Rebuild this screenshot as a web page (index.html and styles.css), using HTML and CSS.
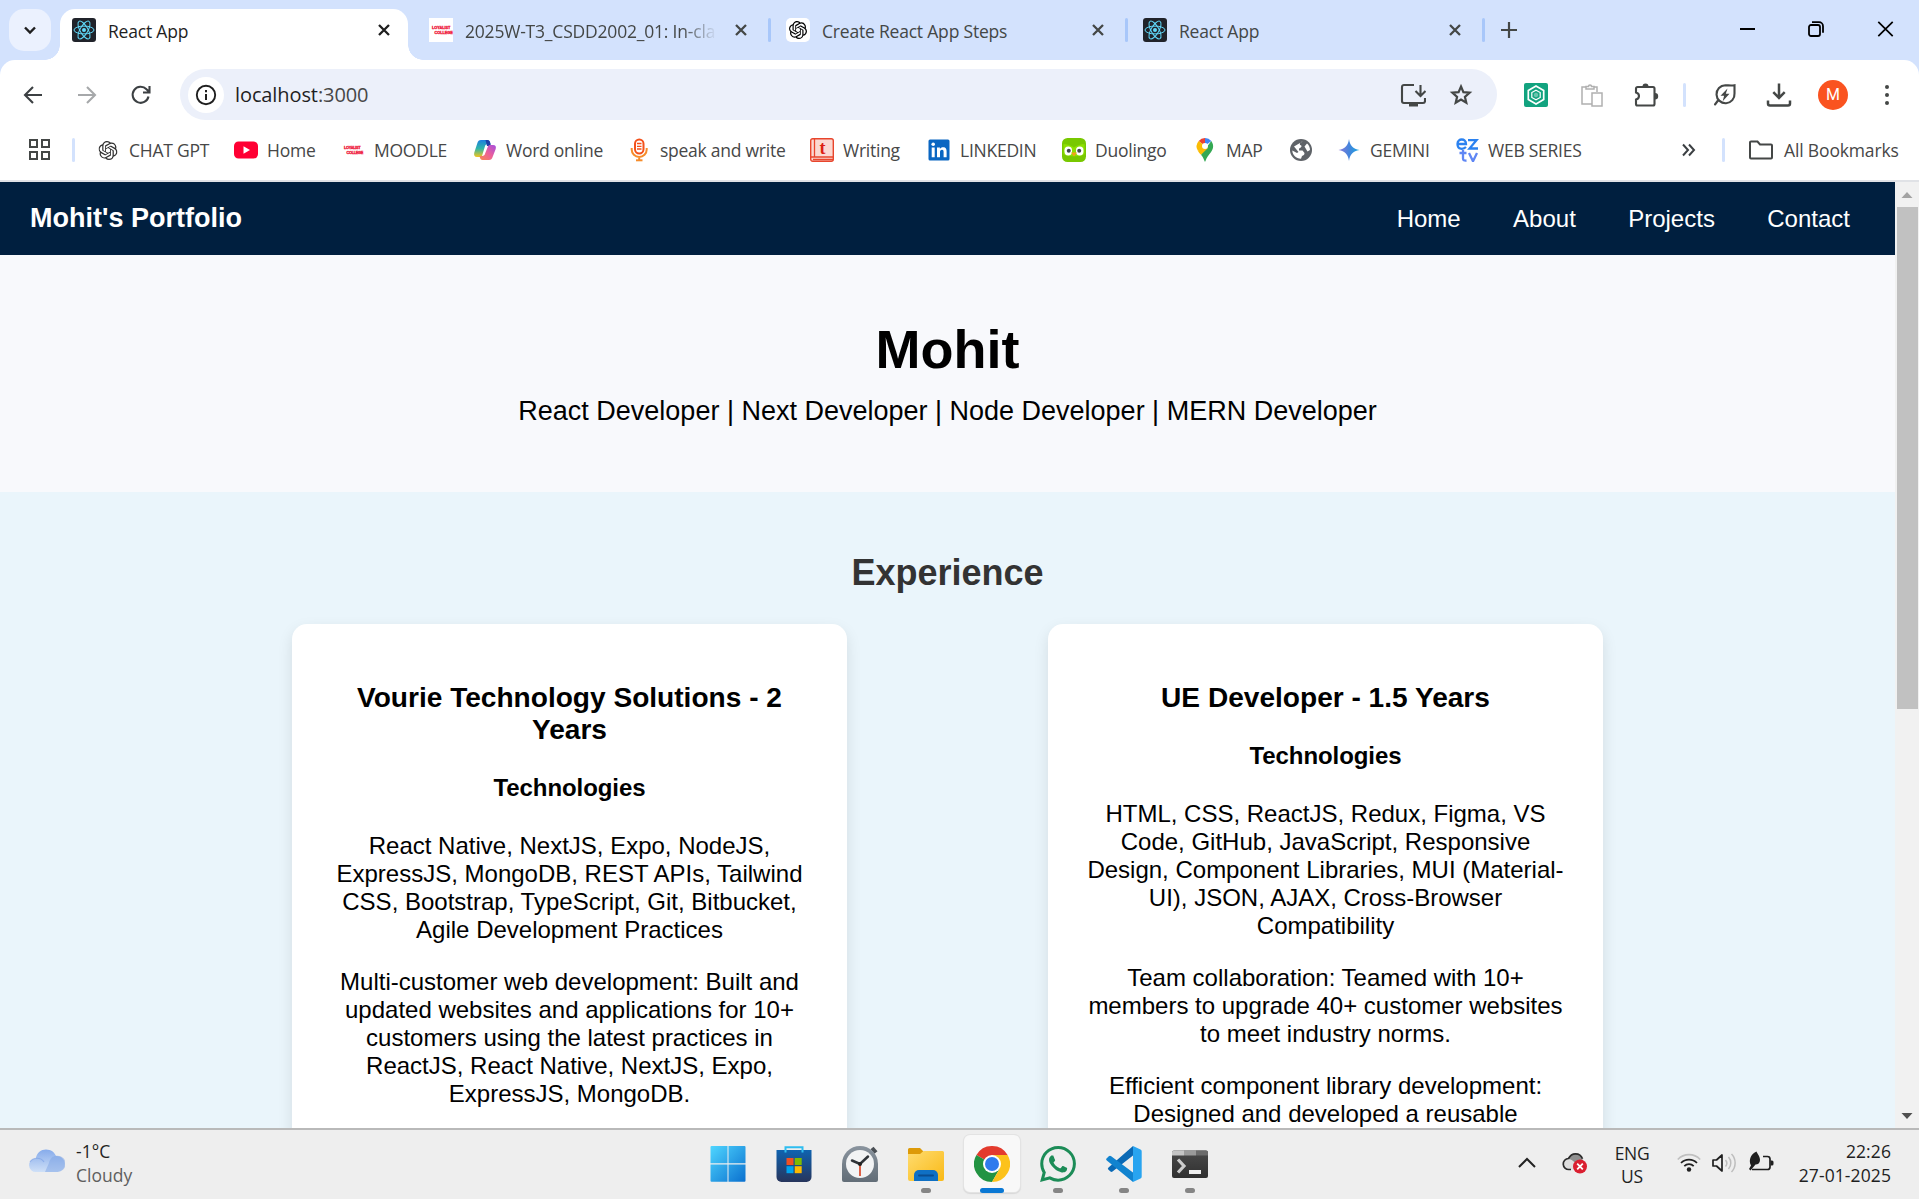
FILE: index.html
```html
<!DOCTYPE html>
<html lang="en">
<head>
<meta charset="utf-8">
<title>React App</title>
<link rel="stylesheet" href="styles.css">
</head>
<body>
<svg class="defs" width="0" height="0">
  <defs>
    <symbol id="react" viewBox="0 0 24 24"><rect width="24" height="24" rx="3" fill="#20232a"/><g fill="none" stroke="#61dafb" stroke-width="1"><ellipse cx="12" cy="12" rx="10" ry="3.9"/><ellipse cx="12" cy="12" rx="10" ry="3.9" transform="rotate(60 12 12)"/><ellipse cx="12" cy="12" rx="10" ry="3.9" transform="rotate(120 12 12)"/></g><circle cx="12" cy="12" r="2" fill="#61dafb"/></symbol>
    <symbol id="openai" viewBox="0 0 24 24"><path d="M22.2819 9.8211a5.9847 5.9847 0 0 0-.5157-4.9108 6.0462 6.0462 0 0 0-6.5098-2.9A6.0651 6.0651 0 0 0 4.9807 4.1818a5.9847 5.9847 0 0 0-3.9977 2.9 6.0462 6.0462 0 0 0 .7427 7.0966 5.98 5.98 0 0 0 .511 4.9107 6.051 6.051 0 0 0 6.5146 2.9001A5.9847 5.9847 0 0 0 13.2599 24a6.0557 6.0557 0 0 0 5.7718-4.2058 5.9894 5.9894 0 0 0 3.9977-2.9001 6.0557 6.0557 0 0 0-.7475-7.0729zm-9.022 12.6081a4.4755 4.4755 0 0 1-2.8764-1.0408l.1419-.0804 4.7783-2.7582a.7948.7948 0 0 0 .3927-.6813v-6.7369l2.02 1.1686a.071.071 0 0 1 .038.052v5.5826a4.504 4.504 0 0 1-4.4945 4.4944zm-9.6607-4.1254a4.4708 4.4708 0 0 1-.5346-3.0137l.142.0852 4.783 2.7582a.7712.7712 0 0 0 .7806 0l5.8428-3.3685v2.3324a.0804.0804 0 0 1-.0332.0615L9.74 19.9502a4.4992 4.4992 0 0 1-6.1408-1.6464zM2.3408 7.8956a4.485 4.485 0 0 1 2.3655-1.9728V11.6a.7664.7664 0 0 0 .3879.6765l5.8144 3.3543-2.0201 1.1685a.0757.0757 0 0 1-.071 0l-4.8303-2.7865A4.504 4.504 0 0 1 2.3408 7.872zm16.5963 3.8558L13.1038 8.364 15.1192 7.2a.0757.0757 0 0 1 .071 0l4.8303 2.7913a4.4944 4.4944 0 0 1-.6765 8.1042v-5.6772a.79.79 0 0 0-.407-.667zm2.0107-3.0231l-.142-.0852-4.7735-2.7818a.7759.7759 0 0 0-.7854 0L9.409 9.2297V6.8974a.0662.0662 0 0 1 .0284-.0615l4.8303-2.7866a4.4992 4.4992 0 0 1 6.6802 4.66zM8.3065 12.863l-2.02-1.1638a.0804.0804 0 0 1-.038-.0567V6.0742a4.4992 4.4992 0 0 1 7.3757-3.4537l-.142.0805L8.704 5.459a.7948.7948 0 0 0-.3927.6813zm1.0976-2.3654l2.602-1.4998 2.6069 1.4998v2.9994l-2.5974 1.4997-2.6067-1.4997Z"/></symbol>
    <symbol id="x" viewBox="0 0 24 24"><path d="M7 7l10 10M17 7L7 17" fill="none" stroke="currentColor" stroke-width="2.3"/></symbol>
    <linearGradient id="gWin" x1="0" y1="0" x2="1" y2="1"><stop offset="0" stop-color="#4fd6ff"/><stop offset="1" stop-color="#0a70cf"/></linearGradient>
    <linearGradient id="gStore" x1="0" y1="0" x2="0" y2="1"><stop offset="0" stop-color="#0f63b0"/><stop offset="1" stop-color="#27355c"/></linearGradient>
    <linearGradient id="gGray" x1="0" y1="0" x2="0" y2="1"><stop offset="0" stop-color="#8a949e"/><stop offset="1" stop-color="#626d77"/></linearGradient>
    <linearGradient id="gFolder" x1="0" y1="0" x2="1" y2="1"><stop offset="0" stop-color="#ffdc70"/><stop offset="1" stop-color="#f9b916"/></linearGradient>
    <linearGradient id="gCloud" x1="0" y1="0" x2="0" y2="1"><stop offset="0" stop-color="#86abeb"/><stop offset="1" stop-color="#cfe0f7"/></linearGradient>
    <linearGradient id="gGem" x1="0" y1="0" x2="1" y2="0"><stop offset="0" stop-color="#8b7bd8"/><stop offset=".5" stop-color="#4584dc"/><stop offset="1" stop-color="#1aa6e0"/></linearGradient>
    <linearGradient id="gTerm" x1="0" y1="0" x2="0" y2="1"><stop offset="0" stop-color="#4a4a4a"/><stop offset="1" stop-color="#303030"/></linearGradient>
    <linearGradient id="gCopA" x1="0" y1="0" x2="0" y2="1"><stop offset="0" stop-color="#1b7fe0"/><stop offset=".5" stop-color="#2fb5a8"/><stop offset="1" stop-color="#f3c51c"/></linearGradient>
    <linearGradient id="gCopB" x1="1" y1="0" x2="0" y2="1"><stop offset="0" stop-color="#a24ee0"/><stop offset=".5" stop-color="#ec5f9a"/><stop offset="1" stop-color="#f98a4b"/></linearGradient>
  </defs>
</svg>

<div class="screen">
  <header class="tabstrip">
    <button class="tab-search"><svg width="24" height="24" viewBox="0 0 24 24"><path d="M7 9.5l5 5 5-5" fill="none" stroke="#1f1f1f" stroke-width="2.4"/></svg></button>
    <div class="tab active"><svg class="fav"><use href="#react"/></svg><span class="title">React App</span><svg class="close"><use href="#x"/></svg></div>
    <div class="tab"><svg class="fav" viewBox="0 0 24 24"><rect width="24" height="24" fill="#fff"/><g class="loyalist"><text x="3" y="11">LOYALIST</text><text x="5.5" y="15.5">COLLEGE</text></g></svg><span class="title fade">2025W-T3_CSDD2002_01: In-cla</span><svg class="close"><use href="#x"/></svg></div>
    <i class="tab-sep"></i>
    <div class="tab"><svg class="fav" viewBox="0 0 24 24"><rect width="24" height="24" rx="5" fill="#fff"/><use href="#openai" x="3" y="3" width="18" height="18"/></svg><span class="title">Create React App Steps</span><svg class="close"><use href="#x"/></svg></div>
    <i class="tab-sep"></i>
    <div class="tab"><svg class="fav"><use href="#react"/></svg><span class="title">React App</span><svg class="close"><use href="#x"/></svg></div>
    <i class="tab-sep"></i>
    <svg class="plus" width="24" height="24" viewBox="0 0 24 24"><path d="M12 4v16M4 12h16" stroke="#444746" stroke-width="2.2"/></svg>
    <div class="win-controls">
      <svg width="24" height="24" viewBox="0 0 24 24"><path d="M5 12h15" stroke="#000" stroke-width="2"/></svg>
      <svg width="24" height="24" viewBox="0 0 24 24"><g fill="none" stroke="#000" stroke-width="1.8"><rect x="5" y="8" width="11" height="11" rx="2"/><path d="M8 5.200h7a4 4 0 0 1 4 4v6.500"/></g></svg>
      <svg width="24" height="24" viewBox="0 0 24 24"><path d="M5.300 4.800l14.400 14.400M19.700 4.800L5.300 19.200" stroke="#000" stroke-width="1.700"/></svg>
    </div>
  </header>

  <div class="chrome">
    <div class="toolbar">
      <div class="nav-buttons">
        <svg width="24" height="24" viewBox="0 0 24 24"><path d="M21 12H4M12 4l-8 8 8 8" fill="none" stroke="#3c4043" stroke-width="2.100"/></svg>
        <svg width="24" height="24" viewBox="0 0 24 24"><path d="M3 12h17M12 4l8 8-8 8" fill="none" stroke="#a6a8aa" stroke-width="2.100"/></svg>
        <svg width="24" height="24" viewBox="0 0 24 24"><path d="M19.500 13.500a8 8 0 1 1-2-7.200L20.300 9M20.500 3v6.500H14" fill="none" stroke="#3c4043" stroke-width="2.100"/></svg>
      </div>
      <div class="omnibox">
        <span class="info"><svg width="24" height="24" viewBox="0 0 24 24"><circle cx="12" cy="12" r="9.200" fill="none" stroke="#1f1f1f" stroke-width="1.900"/><path d="M12 11v6M12 7v2.200" stroke="#1f1f1f" stroke-width="2"/></svg></span>
        <span class="url">localhost<em>:3000</em></span>
        <svg class="install" width="26" height="26" viewBox="0 0 26 26"><path d="M14 3H4a2 2 0 0 0-2 2v14a2 2 0 0 0 2 2h19a2 2 0 0 0 2-2v-3M20.500 3v11M15.500 9l5 5 5-5" fill="none" stroke="#444746" stroke-width="2.100"/><path d="M9 20.500h9v4H9z" fill="#444746"/></svg>
        <svg width="24" height="24" viewBox="0 0 24 24"><path d="M12 3.500l2.400 5.700 6.200.5-4.700 4.100 1.400 6L12 16.600l-5.300 3.200 1.400-6-4.700-4.100 6.200-.5z" fill="none" stroke="#444746" stroke-width="2.200"/></svg>
      </div>
      <div class="actions">
        <svg class="ext" width="24" height="24" viewBox="0 0 24 24"><rect width="24" height="24" rx="2" fill="#12a37f"/><path d="M12 3l7.700 4.500v9L12 21l-7.700-4.500v-9z" fill="none" stroke="#fff" stroke-width="1.700"/><path d="M12 7.200l4.200 2.400v4.800L12 16.800l-4.200-2.400V9.600z" fill="none" stroke="#fff" stroke-width="1.200"/><path d="M12 9.600l2.100 1.200v2.400L12 14.400l-2.100-1.200v-2.400z" fill="#6cc5ad"/></svg>
        <svg class="clip" width="24" height="24" viewBox="0 0 24 24"><g fill="none" stroke="#b0b0b0" stroke-width="1.500"><path d="M6 4H2v17h10M14 4h3v5M6 6V3.500h2.500a1.500 1.500 0 0 1 3 0H14V6z"/><rect x="12" y="10" width="10" height="13" fill="#fff"/></g></svg>
        <svg class="puzzle" width="26" height="26" viewBox="0 0 26 26"><path d="M3 6.500a1.500 1.500 0 0 1 1.500-1.500h15.500a1.500 1.500 0 0 1 1.500 1.500v15.500a1.500 1.500 0 0 1-1.500 1.500h-15.500a1.500 1.500 0 0 1-1.500-1.500v-4.500c4-1 4-6 0-7z" fill="none" stroke="#444746" stroke-width="2.100"/><path d="M9.500 4.500a3 3 0 0 1 6 0zM22 11a3 3 0 0 1 0 6.400z" fill="#444746"/></svg>
        <i class="sep"></i>
        <svg class="leaf" width="26" height="26" viewBox="0 0 26 26"><path d="M22.500 3.200v8.300a9 9 0 1 1-9.200-8.300c3 0 5.500.8 9.200 0zM6 18.500L3 22.500" fill="none" stroke="#444746" stroke-width="2.100" stroke-linecap="round"/><path d="M15.500 6.500l-7 7.300h3.600l-1.400 5.500 6.800-7.500h-3.700z" fill="#444746"/></svg>
        <svg class="dl" width="26" height="26" viewBox="0 0 26 26"><path d="M13 1.500v14M7.300 10.200L13 16l5.700-5.800M2 18.500v3a2 2 0 0 0 2 2h18a2 2 0 0 0 2-2v-3" fill="none" stroke="#444746" stroke-width="2.500"/></svg>
        <span class="avatar">M</span>
        <svg class="dots" width="24" height="24" viewBox="0 0 24 24" fill="#444746"><circle cx="12" cy="4" r="2"/><circle cx="12" cy="12" r="2"/><circle cx="12" cy="20" r="2"/></svg>
      </div>
    </div>

    <div class="bookmarks">
      <svg class="apps" width="24" height="24" viewBox="0 0 24 24"><g fill="none" stroke="#444746" stroke-width="2"><rect x="2" y="2" width="7" height="7"/><rect x="14" y="2" width="7" height="7"/><rect x="2" y="14" width="7" height="7"/><rect x="14" y="14" width="7" height="7"/></g></svg>
      <i class="sep"></i>
      <div class="marks">
        <a><svg viewBox="0 0 24 24"><use href="#openai" x="2.500" y="3" width="19" height="19" fill="#333"/></svg><span>CHAT GPT</span></a>
        <a><svg viewBox="0 0 24 24"><rect y="3.500" width="24" height="17" rx="4.500" fill="#ff0033"/><path d="M9.500 8.300l6.500 3.700-6.500 3.700z" fill="#fff"/></svg><span>Home</span></a>
        <a><svg viewBox="0 0 24 24"><g class="loyalist"><text x="3" y="11">LOYALIST</text><text x="5.500" y="15.500">COLLEGE</text></g></svg><span>MOODLE</span></a>
        <a><svg viewBox="0 0 24 24"><path d="M8 2h6.500c1.500 0 2.200 1 2.600 2.400L17.500 6H15c-2 0-2.700 1-3.200 2.700L9.300 17c-.5 1.500-1.300 2-2.800 2H4C1.500 19 .6 17 1.300 14.500L4.400 5C5 3 6 2 8 2z" fill="url(#gCopA)"/><path d="M12.500 2h2c1.500 0 2.200 1 2.600 2.400L18 8h-4z" fill="#1c3fa8"/><path d="M16 22H9.500C8 22 7.300 21 6.900 19.600L6.500 18H9c2 0 2.700-1 3.200-2.700L14.700 9c.5-1.500 1.300-2 2.800-2H20c2.500 0 3.400 1.500 2.700 4L19.600 19c-.6 2-1.600 3-3.600 3z" fill="url(#gCopB)"/></svg><span>Word online</span></a>
        <a><svg viewBox="0 0 24 24"><rect x="8" y="1.500" width="8.500" height="14" rx="4.200" fill="#fff" stroke="#f4511b" stroke-width="2"/><path d="M10 5.500h4.500M10 8.300h4.500M10 11h4.500" stroke="#f4511b" stroke-width="1.300"/><path d="M4.700 10v1.500a7.500 7.500 0 0 0 15 0V10M12.200 19v3.500" fill="none" stroke="#f68c2a" stroke-width="2"/><path d="M9 22.300h6.500" stroke="#f68c2a" stroke-width="2"/></svg><span>speak and write</span></a>
        <a><svg viewBox="0 0 24 24"><rect x=".7" y=".7" width="22.600" height="22.600" rx="2" fill="#fbd9d2" stroke="#e8452c" stroke-width="1.400"/><path d="M4.500 1v18M1 19h22M3 21.500h20" stroke="#e8452c" stroke-width="1.300"/><text x="9.500" y="16" font-family="Liberation Serif" font-weight="700" font-size="18" fill="#dd1f12">t</text></svg><span>Writing</span></a>
        <a><svg viewBox="0 0 24 24"><rect x="1.500" y="1.500" width="21" height="21" rx="1.500" fill="#0a66c2"/><path d="M4.700 9.500h3v9.700h-3zM10 9.500h2.900v1.400c.6-1 1.700-1.700 3.200-1.700 2.900 0 3.500 1.900 3.500 4.500v5.500h-3v-4.900c0-1.300-.1-2.500-1.600-2.500S13 13 13 14.300v4.900h-3z" fill="#fff"/><circle cx="6.200" cy="6.300" r="1.800" fill="#fff"/></svg><span>LINKEDIN</span></a>
        <a><svg viewBox="0 0 24 24"><rect width="24" height="24" rx="5.500" fill="#78c800"/><path d="M1.500 6c3 .5 6 .5 10.500 3.500 4.500-3 7.500-3 10.500-3.500v10c-3 3-18 3-21 0z" fill="#8ee000"/><rect x="2.500" y="8.500" width="7.500" height="9" rx="3.700" fill="#fff"/><rect x="14" y="8.500" width="7.500" height="9" rx="3.700" fill="#fff"/><circle cx="6.800" cy="12.800" r="2" fill="#42464b"/><circle cx="17.200" cy="12.800" r="2" fill="#42464b"/><path d="M9 14.500h6L12 18.500z" fill="#f6a01a"/></svg><span>Duolingo</span></a>
        <a><svg viewBox="0 0 24 24"><path d="M12 0a8.200 8.200 0 0 0-6.300 2.900L12 8z" fill="#ea4335"/><path d="M12 0a8.200 8.200 0 0 1 6.300 2.900L12 8z" fill="#4285f4"/><path d="M5.700 2.900A8.500 8.500 0 0 0 5 13l7-5z" fill="#fbbc04"/><path d="M18.300 2.900C22 8 19.500 12.500 16.500 16 13.500 19.500 13 22 12 24c-1-2-1.500-4.500-4-7.300z" fill="#34a853"/><path d="M5 13c1 2 2 2.800 3 3.700L15 10l-5-3z" fill="#fbbc04"/><circle cx="12" cy="8" r="3" fill="#fff"/></svg><span>MAP</span></a>
        <a><svg viewBox="0 0 24 24"><circle cx="12" cy="12" r="11" fill="#5f6368"/><path d="M14 3.300c-3 1-3.500 2.200-3 3.700 3 .5 1 3-1 3.500v2h3.500l2 2.500c0 2-1 2.500-2.500 3l-1 2.700C7 20.500 3.500 17 3.300 12.500L8 15l1.500-1L5 8.500M15.500 8.500l2.500-3c2 1.500 3 4 3 6.500l-2.500 1.500z" fill="#fff"/></svg></a>
        <a><svg viewBox="0 0 24 24"><path d="M12 1c.8 6.500 4 10 10.500 11C16 13 12.800 16.500 12 23 11.200 16.500 8 13 1.500 12 8 11 11.200 7.500 12 1z" fill="url(#gGem)"/></svg><span>GEMINI</span></a>
        <a><svg viewBox="0 0 24 24"><g fill="none" stroke="#2b82f0" stroke-width="2.300"><path d="M2.500 6H11c0-6-8.500-6-8.500 0s6 5.500 8.500 3M13 2.200h8.500L14.500 10.500H23"/><path d="M8 12v8.500q0 2.500 3.500 2M4.500 15h7M14 15l4 8.300 4-8.300" stroke="#5f86f4"/></g></svg><span>WEB SERIES</span></a>
      </div>
      <svg class="more" width="24" height="24" viewBox="0 0 24 24"><path d="M6 6.500l5 5.500-5 5.500M12 6.500l5 5.500-5 5.500" fill="none" stroke="#3c4043" stroke-width="2"/></svg>
      <i class="sep"></i>
      <a class="all"><svg viewBox="0 0 24 24"><path d="M1 4.500a1 1 0 0 1 1-1H8.500l2.500 3h11a1 1 0 0 1 1 1V19.500a1 1 0 0 1-1 1H2a1 1 0 0 1-1-1z" fill="none" stroke="#444746" stroke-width="2"/></svg><span>All Bookmarks</span></a>
    </div>
  </div>

  <div class="viewport">
    <main class="page">
      <nav class="navbar"><div class="logo">Mohit's Portfolio</div><ul><li>Home</li><li>About</li><li>Projects</li><li>Contact</li></ul></nav>
      <section class="hero"><h1>Mohit</h1><p>React Developer | Next Developer | Node Developer | MERN Developer</p></section>
      <section class="experience">
        <h2>Experience</h2>
        <div class="cards">
          <article class="card">
            <h3>Vourie Technology Solutions - 2 Years</h3>
            <h4>Technologies</h4>
            <p>React Native, NextJS, Expo, NodeJS, ExpressJS, MongoDB, REST APIs, Tailwind CSS, Bootstrap, TypeScript, Git, Bitbucket, Agile Development Practices</p>
            <p>Multi-customer web development: Built and updated websites and applications for 10+ customers using the latest practices in ReactJS, React Native, NextJS, Expo, ExpressJS, MongoDB.</p>
          </article>
          <article class="card">
            <h3>UE Developer - 1.5 Years</h3>
            <h4>Technologies</h4>
            <p>HTML, CSS, ReactJS, Redux, Figma, VS Code, GitHub, JavaScript, Responsive Design, Component Libraries, MUI (Material-UI), JSON, AJAX, Cross-Browser Compatibility</p>
            <p>Team collaboration: Teamed with 10+ members to upgrade 40+ customer websites to meet industry norms.</p>
            <p>Efficient component library development: Designed and developed a reusable</p>
          </article>
        </div>
      </section>
    </main>
    <aside class="scrollbar">
      <svg width="24" height="25" viewBox="0 0 24 25"><path d="M6.500 16L12 10l5.500 6z" fill="#a3a3a3"/></svg>
      <div class="thumb"></div>
      <svg class="down" width="24" height="25" viewBox="0 0 24 25"><path d="M6.500 10h11L12 16z" fill="#505050"/></svg>
    </aside>
  </div>

  <footer class="taskbar">
    <div class="weather">
      <svg width="36" height="24" viewBox="0 0 36 24"><path d="M7 23a6.700 6.700 0 0 1-.3-13.500C8 3.500 12 .5 17 .5c5 0 8.500 2.800 10 6.500A8 8 0 0 1 28.500 23z" fill="url(#gCloud)"/><path d="M20 14c1-5 4.500-7.500 8.500-7.300A8.100 8.100 0 0 1 28.500 23H16z" fill="#7ea3e4" opacity=".5"/><path d="M1 13c3-5 11-5 14 0" fill="none" stroke="#789fe4" stroke-width="1.200" opacity=".6"/></svg>
      <div><b>-1°C</b><span>Cloudy</span></div>
    </div>
    <div class="apps-row">
      <div class="app"><svg viewBox="0 0 36 36"><g fill="url(#gWin)"><path d="M1.500 0h16v17.300H.5V1a1 1 0 0 1 1-1zM18.500 0h16a1 1 0 0 1 1 1v16.300h-17zM.5 18.500h17v17.300h-16a1 1 0 0 1-1-1zM18.500 18.500h17v16.300a1 1 0 0 1-1 1h-16z"/></g></svg></div>
      <div class="app"><svg viewBox="0 0 36 36"><path d="M.5 4h35v27a5 5 0 0 1-5 5h-25a5 5 0 0 1-5-5z" fill="url(#gStore)"/><path d="M9.500 6.500V1.200h17v5.300" fill="none" stroke="#2ebdf0" stroke-width="2"/><path d="M10.500 12h7v7h-7z" fill="#f25022"/><path d="M18.700 12h7v7h-7z" fill="#7fba00"/><path d="M10.500 20.200h7v7h-7z" fill="#00a4ef"/><path d="M18.700 20.200h7v7h-7z" fill="#ffb900"/></svg></div>
      <div class="app"><svg viewBox="0 0 36 36"><path d="M30 2l4 4.500" stroke="#4a4f54" stroke-width="4"/><path d="M0 18a18 18 0 0 1 36 0v16a2 2 0 0 1-2 2H2a2 2 0 0 1-2-2z" fill="url(#gGray)"/><circle cx="18" cy="18" r="14" fill="#f2f3f4"/><path d="M18 18v12" stroke="#d83b1b" stroke-width="1.600"/><path d="M10 14.500l8 3.500 8-7.500" fill="none" stroke="#2f3338" stroke-width="2.500" stroke-linecap="round"/><circle cx="18" cy="18" r="2" fill="#222"/></svg></div>
      <div class="app"><svg viewBox="0 0 36 36"><path d="M0 3.500A1.500 1.500 0 0 1 1.500 2H12l3 3v5H0z" fill="#dd9a08"/><path d="M0 8h12l3.500-3H34.500A1.500 1.500 0 0 1 36 6.500V33a2 2 0 0 1-2 2H2a2 2 0 0 1-2-2z" fill="url(#gFolder)"/><path d="M6 35v-6a5 5 0 0 1 5-5h14a5 5 0 0 1 5 5v6z" fill="#0f70c4"/><path d="M11 29.500h14" stroke="#0a4d90" stroke-width="2" stroke-linecap="round"/></svg><i></i></div>
      <div class="app current"><svg viewBox="0 0 36 36"><path d="M18 18L2.410 9A18 18 0 0 1 33.590 9z" fill="#e33b2e"/><path d="M18 18L2.410 9A18 18 0 0 0 18 36l7.800-13.500z" fill="#229342"/><path d="M18 9h15.590A18 18 0 0 1 18 36l7.800-13.500z" fill="#fcc21b"/><circle cx="18" cy="18" r="9" fill="#fff"/><circle cx="18" cy="18" r="7" fill="#2f7bed"/></svg><i></i></div>
      <div class="app"><svg viewBox="0 0 24 24"><path fill="#1c8c57" d="M17.472 14.382c-.297-.149-1.758-.867-2.03-.967-.273-.099-.471-.148-.67.15-.197.297-.767.966-.94 1.164-.173.199-.347.223-.644.075-.297-.15-1.255-.463-2.39-1.475-.883-.788-1.48-1.761-1.653-2.059-.173-.297-.018-.458.13-.606.134-.133.298-.347.446-.52.149-.174.198-.298.298-.497.099-.198.05-.371-.025-.52-.075-.149-.669-1.612-.916-2.207-.242-.579-.487-.5-.669-.51-.173-.008-.371-.01-.57-.01-.198 0-.52.074-.792.372-.272.297-1.040 1.016-1.040 2.479 0 1.462 1.065 2.875 1.213 3.074.149.198 2.096 3.200 5.077 4.487.709.306 1.262.489 1.694.625.712.227 1.360.195 1.871.118.571-.085 1.758-.719 2.006-1.413.248-.694.248-1.289.173-1.413-.074-.124-.272-.198-.57-.347m-5.421 7.403h-.004a9.870 9.870 0 01-5.031-1.378l-.361-.214-3.741.982.998-3.648-.235-.374a9.860 9.860 0 01-1.510-5.260c.001-5.450 4.436-9.884 9.888-9.884 2.640 0 5.122 1.030 6.988 2.898a9.825 9.825 0 012.893 6.994c-.003 5.450-4.437 9.884-9.885 9.884m8.413-18.297A11.815 11.815 0 0012.050 0C5.495 0 .16 5.335.157 11.892c0 2.096.547 4.142 1.588 5.945L.057 24l6.305-1.654a11.882 11.882 0 005.683 1.448h.005c6.554 0 11.890-5.335 11.893-11.893a11.821 11.821 0 00-3.480-8.413z"/></svg><i></i></div>
      <div class="app"><svg viewBox="0 0 36 36"><path d="M27 0L2.500 21.500a1.500 1.500 0 0 0 0 2.300l2 1.700a1.500 1.500 0 0 0 2 0L27 9.500z" fill="#0a69b5"/><path d="M27 36L.8 14.500a1.500 1.500 0 0 1 0-2.300l2-1.900a2 2 0 0 1 2.400 0L27 26.500z" fill="#1183cf"/><path d="M27 0l7.500 3.500a2 2 0 0 1 1.200 2v25a2 2 0 0 1-1.200 2L27 36z" fill="#28a4f0"/></svg><i></i></div>
      <div class="app"><svg viewBox="0 0 36 36"><rect y="4.500" width="36" height="27.500" rx="2" fill="url(#gTerm)"/><path d="M2 4.500h10v5H0v-3a2 2 0 0 1 2-2z" fill="#c4c4c4"/><path d="M12 4.500h12v5H12z" fill="#9a9a9a"/><path d="M24 4.500h10a2 2 0 0 1 2 2v3H24z" fill="#6b6b6b"/><path d="M6 13.500l6 6.500-6 6.500" fill="none" stroke="#ccc" stroke-width="3.200"/><path d="M17 26h12" stroke="#eee" stroke-width="4"/></svg><i></i></div>
    </div>
    <div class="tray">
      <svg class="caret" width="24" height="24" viewBox="0 0 24 24"><path d="M4 16l8-8 8 8" fill="none" stroke="#222" stroke-width="2"/></svg>
      <svg class="onedrive" width="26" height="24" viewBox="0 0 26 24"><path d="M6.500 8C8 4.500 10.500 2.800 13.500 2.800c3.500 0 6 2 7 5V14H12z" fill="#8f8f8f"/><path d="M2 13c0-5 6-6 9-3l4 3v5.500H7A5 5 0 0 1 2 13z" fill="#dedede"/><path d="M9 18.500H7a5.500 5.500 0 0 1-.5-11C8 4.500 10.500 2.800 13.500 2.800c3.500 0 6 2 7 5" fill="none" stroke="#2b2b2b" stroke-width="1.700"/><circle cx="18" cy="15.500" r="7" fill="#da1f30"/><path d="M15.200 12.700l5.600 5.600M20.800 12.700l-5.600 5.600" stroke="#fff" stroke-width="1.800"/></svg>
      <div class="lang"><span>ENG</span><span>US</span></div>
      <svg class="wifi" width="24" height="24" viewBox="0 0 24 24"><g fill="none" stroke-width="1.700"><path d="M.8 8.500a15.500 15.500 0 0 1 22.400 0" stroke="#c0c0c0"/><path d="M4 12a11 11 0 0 1 16 0M7.300 15.200a6.500 6.500 0 0 1 9.400 0" stroke="#1f1f1f"/></g><circle cx="12" cy="18.500" r="2.200" fill="#1f1f1f"/></svg>
      <svg class="vol" width="26" height="24" viewBox="0 0 26 24"><path d="M2 9h3.500L11 4v16l-5.500-5H2z" fill="none" stroke="#1f1f1f" stroke-width="1.700" stroke-linejoin="round"/><path d="M14.500 9a5 5 0 0 1 0 6.500M17.500 6a9 9 0 0 1 0 12M20.500 3a13 13 0 0 1 0 18" fill="none" stroke="#bdbdbd" stroke-width="1.500"/></svg>
      <svg class="batt" width="26" height="24" viewBox="0 0 26 24"><path d="M15 5.500h4.500a2.500 2.500 0 0 1 2.500 2.500v8a2.500 2.500 0 0 1-2.500 2.500H4" fill="none" stroke="#1f1f1f" stroke-width="1.700"/><path d="M22.500 9.500h1.500a1.500 1.500 0 0 1 1.500 1.500v2a1.500 1.500 0 0 1-1.500 1.500h-1.500z" fill="#1f1f1f"/><path d="M8.500.5c.5 2 3.500 4.500 3.500 8.500 0 3-2 4.500-4.500 4.500l-5 6L1 18l2-3.500C.5 10 2 3.500 8.500.5z" fill="#1f1f1f"/></svg>
      <div class="clock"><span>22:26</span><span>27-01-2025</span></div>
    </div>
  </footer>
</div>
</body>
</html>
```
FILE: styles.css
```css
* { box-sizing: border-box; }
body { margin: 0; overflow: hidden; font-family: "Open Sans", "Noto Sans", sans-serif; }
svg { display: block; flex: none; }
.defs { position: absolute; }
.screen { width: 1919px; height: 1199px; display: flex; flex-direction: column; background: #d3e2fd; }

/* Tab strip */
.tabstrip { height: 60px; flex: none; display: flex; padding: 9px 22px 0 9px; color: #444746; font-size: 17.500px; }
.tab-search { width: 42px; height: 42px; border: 0; padding: 0; border-radius: 15px; background: #ebf1fe; display: flex; align-items: center; justify-content: center; margin-right: 9px; }
.tab { width: 348px; height: 51px; display: flex; align-items: center; padding: 0 12px 9px; margin-right: 8px; }
.tab + .tab { margin-left: 1px; }
.tab.active { background: #fff; border-radius: 15px 15px 0 0; color: #1f1f1f; position: relative; }
.tab.active::before, .tab.active::after { content: ""; position: absolute; bottom: 0; width: 15px; height: 15px; }
.tab.active::before { left: -15px; background: radial-gradient(circle at 0 0, transparent 14.500px, #fff 15px); }
.tab.active::after { right: -15px; background: radial-gradient(circle at 100% 0, transparent 14.500px, #fff 15px); }
.fav { width: 24px; height: 24px; margin-right: 12px; }
.title { flex: 1; white-space: nowrap; letter-spacing: -.2px; line-height: 26px; padding-top: 1px; }
.fade { -webkit-mask-image: linear-gradient(90deg, #000 86%, transparent); }
.close { width: 24px; height: 24px; margin-left: 12px; }
.tab-sep { width: 3px; height: 24px; margin: 9px 1px 0 -5px; background: #a8c7fa; border-radius: 2px; }
.tab-sep + .tab { width: 348px; margin-left: 2px; }
.plus { margin: 9px 0 0 11px; }
.win-controls { margin: 8px 0 0 auto; display: flex; gap: 45px; }
.loyalist { fill: #ef2846; stroke: #ef2846; stroke-width: .4; font: 700 3.800px "Liberation Sans", Arial, sans-serif; }

/* Toolbar */
.chrome { flex: none; height: 122px; background: #fff; border-radius: 15px 15px 0 0; border-bottom: 2px solid #e0e2e6; }
.toolbar { height: 60px; display: flex; align-items: center; padding-top: 9px; }
.nav-buttons { width: 180px; display: flex; gap: 30px; padding-left: 21px; }
.omnibox { width: 1317px; height: 51px; border-radius: 26px; background: #ecf0fa; display: flex; align-items: center; padding: 0 24px 0 8px; }
.info { width: 36px; height: 36px; border-radius: 50%; background: #fff; display: flex; align-items: center; justify-content: center; margin-right: 11px; }
.url { flex: 1; font-size: 20px; letter-spacing: -.1px; color: #1f1f1f; }
.url em { font-style: normal; color: #474747; }
.install { margin-right: 23px; }
.actions { flex: 1; display: flex; align-items: center; }
.ext { margin: 0 32px 0 27px; }
.clip { margin-right: 29px; }
.puzzle { margin-right: 24px; }
.leaf { margin: 0 28px 0 26px; }
.dl { margin-right: 26px; }
.dots { margin-left: 27px; }
.sep { width: 3px; height: 24px; border-radius: 2px; background: #d3e2fd; flex: none; }
.avatar { width: 30px; height: 30px; border-radius: 50%; background: #fa5320; color: #fff; display: flex; align-items: center; justify-content: center; font: 16px Roboto, sans-serif; }

/* Bookmarks */
.bookmarks { height: 60px; display: flex; align-items: center; font-size: 17.500px; letter-spacing: -.25px; color: #474747; padding-left: 28px; }
.apps { margin-right: 20px; }
.marks { margin-left: 21px; display: grid; grid-template-columns: 138px 107px 132px 154px 183px 117px 135px 131px 96px 48px 118px 222px; }
.bookmarks a { display: flex; align-items: center; gap: 9px; white-space: nowrap; }
.bookmarks a svg { width: 24px; height: 24px; }
.bookmarks a span { margin-top: -1px; }
.more { margin-right: 21px; }
.bookmarks .all { margin-left: 24px; gap: 11px; letter-spacing: -.15px; }

/* Portfolio page */
.viewport { flex: none; height: 946px; display: flex; overflow: hidden; font-family: "Liberation Sans", Arial, sans-serif; }
.page { width: 1895px; overflow: hidden; color: #000; background: #eaf5fb; }
.navbar { height: 73px; background: #001f3f; color: #fff; display: flex; justify-content: space-between; padding: 0 45px 0 30px; }
.logo { font-size: 27px; font-weight: 700; line-height: 73px; }
.navbar ul { list-style: none; margin: 0; padding: 0; display: flex; gap: 52.400px; font-size: 24px; line-height: 74px; }
.hero { height: 237px; background: #f8f9fc; text-align: center; padding-top: 63px; }
.hero h1 { margin: 0; font-size: 54px; line-height: 62px; }
.hero p { margin: 16px 0 0; font-size: 27px; line-height: 31px; }
.experience { text-align: center; padding-top: 60px; }
.experience h2 { margin: 0; font-size: 36px; line-height: 42px; color: #333; }
.cards { display: flex; justify-content: center; gap: 201px; padding-top: 30px; }
.card { width: 555px; height: 700px; padding: 30px; border-radius: 15px; background: #fff; box-shadow: 0 6px 15px rgba(0, 0, 0, .1); }
.card h3 { margin: 28px 0; font-size: 28.080px; line-height: 32px; }
.card h4 { margin: 0 0 30px; font-size: 24px; line-height: 28px; letter-spacing: -.08px; }
.card p { margin: 0 0 24px; font-size: 24px; line-height: 28px; }
.scrollbar { width: 24px; background: #f1f1f1; display: flex; flex-direction: column; }
.thumb { width: 21px; height: 502px; margin-left: 2px; background: #c1c1c1; }
.down { margin-top: auto; }

/* Taskbar */
.taskbar { height: 71px; border-top: 2px solid #b9b9b9; background: #eee; display: grid; grid-template-columns: 697px 526px 1fr; font-size: 17.500px; line-height: 24px; color: #1f1f1f; }
.weather { display: flex; align-items: center; gap: 11px; padding: 0 0 3px 29px; }
.weather svg { margin-bottom: 4px; }
.weather b, .weather span, .lang span, .clock span { display: block; }
.weather b { font-weight: 400; }
.weather span { color: #5f5f5f; }
.apps-row { display: flex; gap: 10px; padding: 5px 3px 0; }
.app { width: 56px; height: 57px; position: relative; padding: 11px 10px; border-radius: 6px; }
.app svg { width: 36px; height: 36px; }
.app i { position: absolute; bottom: -1px; left: 23px; width: 10px; height: 5px; border-radius: 3px; background: #858585; }
.app.current { background: #f8f8f8; box-shadow: 0 0 0 1px #e3e3e3, 0 1px 1px 1px #d8d8d8; }
.app.current i { left: 16px; width: 24px; background: #0a78d4; }
.tray { display: flex; align-items: center; padding-bottom: 3px; }
.caret { margin-left: 292px; }
.onedrive { margin-left: 23px; }
.lang { width: 50px; margin: 3px 0 0 19px; text-align: center; line-height: 23px; letter-spacing: -.3px; }
.wifi { margin-left: 20px; }
.vol { margin-left: 10px; }
.batt { margin-left: 11px; }
.clock { margin: 0 28px 0 auto; text-align: right; letter-spacing: .1px; }
```
